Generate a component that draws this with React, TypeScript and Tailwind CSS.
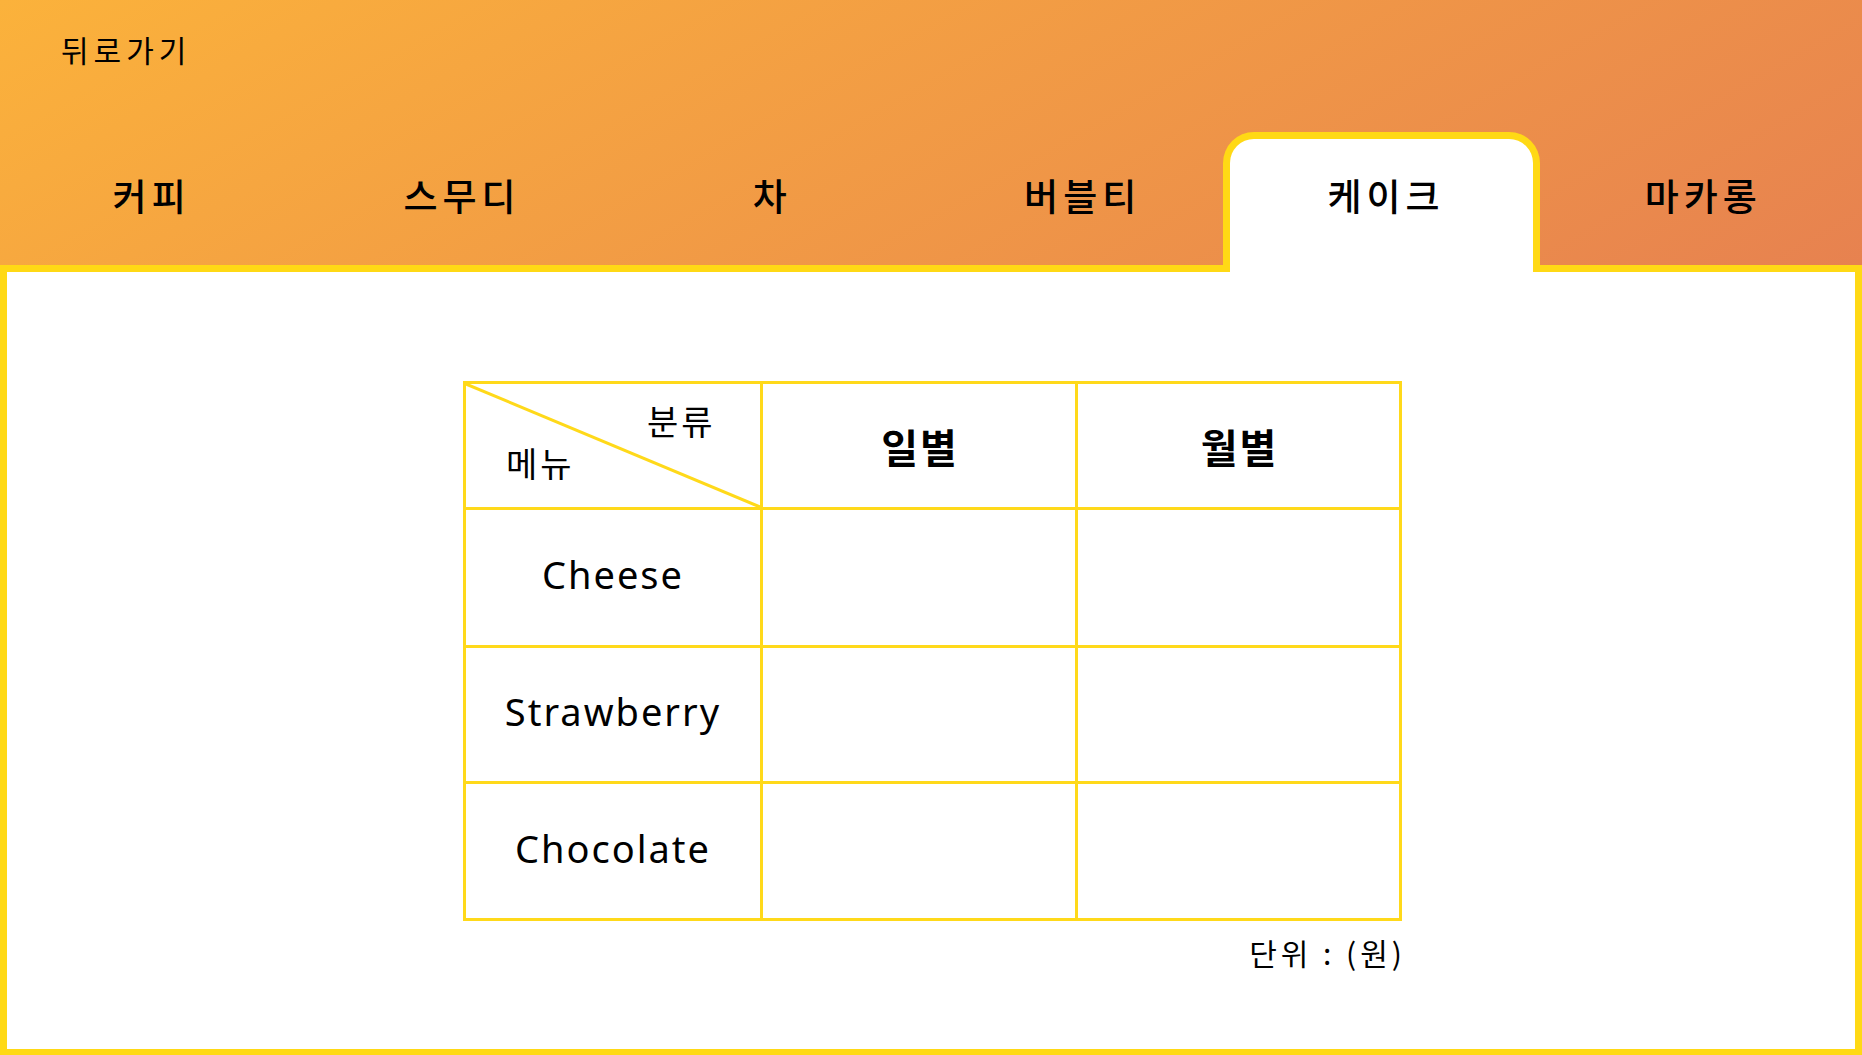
const tabs = ["커피", "스무디", "차", "버블티", "케이크", "마카롱"];
const active = "케이크";
const menus = ["Cheese", "Strawberry", "Chocolate"];

const kr = "font-['Noto_Sans_CJK_KR','Noto_Sans',sans-serif]";

function Tab({ label }: { label: string }) {
  if (label === active) {
    return (
      <div className="relative z-10 -mb-[7px] -ml-[12px] mr-[6px] flex justify-center rounded-t-[31px] border-[7px] border-b-0 border-[#ffd915] bg-white pl-[9px] pt-[38px]">
        <span className="text-[37px] font-medium leading-none tracking-[5px] text-black">{label}</span>
      </div>
    );
  }
  return (
    <div className="flex justify-center pl-[5px] pt-[45px]">
      <span className="text-[37px] font-medium leading-none tracking-[5px] text-black">{label}</span>
    </div>
  );
}

export default function App() {
  return (
    <div className={`flex h-[1055px] w-full flex-col bg-[linear-gradient(to_bottom_right,#fbb23b,#db655c)] ${kr}`}>
      <header className="flex h-[265px] flex-col">
        <div className="pl-[61px] pt-[34px]">
          <button className="text-[30px] leading-none tracking-[5px] text-black">뒤로가기</button>
        </div>
        <nav className="-ml-[6px] mt-auto grid h-[133px] w-full grid-cols-6">
          {tabs.map((t) => (
            <Tab key={t} label={t} />
          ))}
        </nav>
      </header>

      <main className="flex-1 border-[7px] border-b-[6px] border-[#ffd915] bg-white">
        <div className="ml-[456px] mt-[109px] w-[939px]">
          <div className="grid grid-cols-[297px_315px_324px] grid-rows-[126px_138px_136px_137px] border-l-[3px] border-t-[3px] border-[#ffd91a]">
            <div className="relative border-b-[3px] border-r-[3px] border-[#ffd91a]">
              <svg className="absolute inset-0 h-full w-full" preserveAspectRatio="none" viewBox="0 0 100 100">
                <line x1="0" y1="0" x2="100" y2="100" stroke="#ffd91a" strokeWidth="3" vectorEffect="non-scaling-stroke" />
              </svg>
              <span className="absolute left-[181px] top-[20px] text-[34px] leading-none tracking-[3px] text-black">분류</span>
              <span className="absolute left-[40px] top-[62px] text-[34px] leading-none tracking-[3px] text-black">메뉴</span>
            </div>
            <div className="flex items-center justify-center border-b-[3px] border-r-[3px] border-[#ffd91a] pl-[2px] text-[40px] font-bold tracking-[2px] text-black">
              일별
            </div>
            <div className="flex items-center justify-center border-b-[3px] border-r-[3px] border-[#ffd91a] pl-[2px] text-[40px] font-bold tracking-[2px] text-black">
              월별
            </div>
            {menus.map((m) => (
              <>
                <div
                  key={m}
                  className="flex items-center justify-center border-b-[3px] border-r-[3px] border-[#ffd91a] pb-[6px] font-['Noto_Sans',sans-serif] text-[38px] tracking-[2px] text-black"
                >
                  {m}
                </div>
                <div className="border-b-[3px] border-r-[3px] border-[#ffd91a]" />
                <div className="border-b-[3px] border-r-[3px] border-[#ffd91a]" />
              </>
            ))}
          </div>
          <p className="-mr-[4px] mt-[16px] text-right text-[30px] leading-none tracking-[4px] text-black">단위 : (원)</p>
        </div>
      </main>
    </div>
  );
}
